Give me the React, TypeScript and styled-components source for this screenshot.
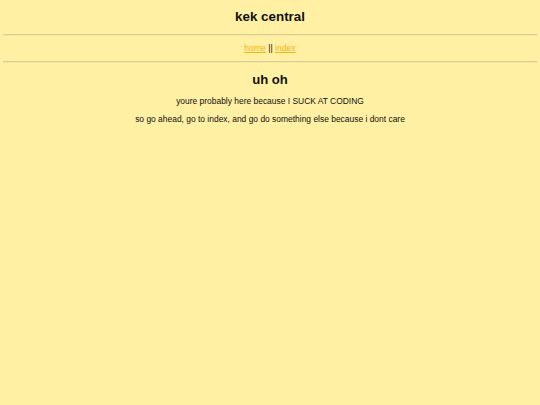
import React from "react";
import styled, { createGlobalStyle } from "styled-components";

const Global = createGlobalStyle`
  html, body { margin: 0; padding: 0; background: #fff0a3; }
  body { font-family: "Liberation Sans", Arial, sans-serif; color: #111; }
`;

const Page = styled.div`
  padding: 0 3px;
  text-align: center;
`;

const Title = styled.h1`
  margin: 0;
  padding-top: 9px;
  height: 25px;
  font-size: 13.4px;
  font-weight: bold;
  line-height: 16px;
`;

const Rule = styled.hr`
  margin: 0;
  border: none;
  border-top: 1px solid #d9cf94;
  border-bottom: 1px solid #f2e6a0;
  height: 0;
`;

const Nav = styled.nav`
  height: 25px;
  font-size: 8.6px;
  line-height: 25px;
`;

const Link = styled.a`
  color: #f2b410;
  text-decoration: underline;
`;

const Heading = styled.h2`
  margin: 0;
  padding-top: 9px;
  font-size: 13.1px;
  line-height: 16px;
  font-weight: bold;
`;

const Text = styled.p<{ $top: number }>`
  margin: 0;
  padding-top: ${(p) => p.$top}px;
  font-size: 8.45px;
  line-height: 11px;
`;

export default function App() {
  return (
    <>
      <Global />
      <Page>
        <Title>kek central</Title>
        <Rule />
        <Nav>
          <Link href="#">home</Link> || <Link href="#">index</Link>
        </Nav>
        <Rule />
        <Heading>uh oh</Heading>
        <Text $top={8}>youre probably here because I SUCK AT CODING</Text>
        <Text $top={7}>so go ahead, go to index, and go do something else because i dont care</Text>
      </Page>
    </>
  );
}
